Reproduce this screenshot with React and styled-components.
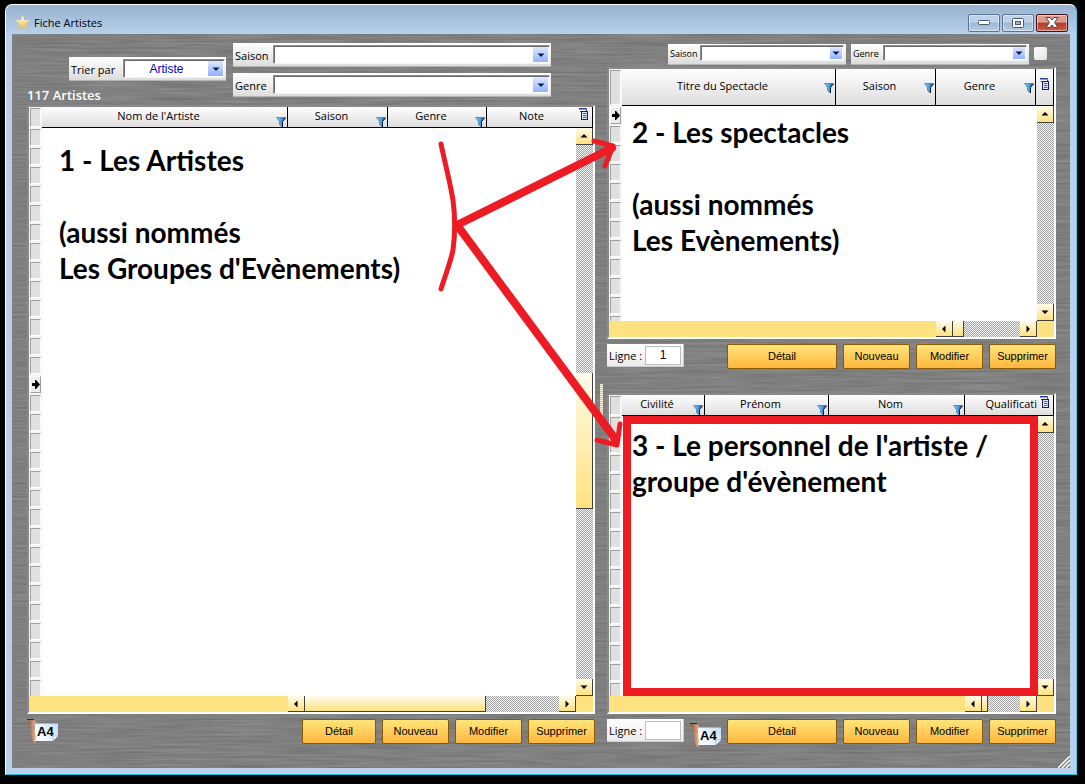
import React from "react";
import styled, { createGlobalStyle, css } from "styled-components";

const UI = `"Open Sans", "Noto Sans", sans-serif`;
const SANS = `"Liberation Sans", Arial, sans-serif`;

const GlobalStyle = createGlobalStyle`
  *, *::before, *::after { box-sizing: border-box; }
  body { margin: 0; background: #000; font-family: ${UI}; color: #000; }
  button, select, input { font: inherit; color: inherit; margin: 0; padding: 0; }
`;

const Page = styled.div`
  position: relative;
  display: flex;
  height: 100vh;
  min-height: 640px;
  min-width: 960px;
  padding: 4px 8px 9px 5px;
  background: #000;
`;

const WindowFrame = styled.main`
  flex: 1;
  display: flex;
  flex-direction: column;
  padding: 0 6px 6px;
  border: 1px solid #fff;
  border-right-color: #3fd0f0;
  border-bottom-color: #1cc4ea;
  border-radius: 7px 7px 0 0;
  background: linear-gradient(#98b3d0, #b9d1ea 30px);
`;

const TitleBar = styled.header`
  flex: none;
  display: flex;
  align-items: center;
  gap: 4px;
  height: 29px;
  padding: 6px 2px 0 3px;
`;

const Title = styled.h1`
  flex: 1;
  margin: 0;
  font-size: 11px;
  line-height: 16px;
  font-weight: 400;
`;

const Controls = styled.div`
  display: flex;
  gap: 2px;
`;

const ControlButton = styled.button`
  display: grid;
  place-items: center;
  width: 32px;
  height: 18px;
  border: 1px solid ${(p) => (p.$close ? "#43101a" : "#5b7394")};
  border-radius: 2px;
  box-shadow: inset 0 0 0 1px rgba(255, 255, 255, 0.45);
  background: ${(p) =>
    p.$close
      ? "linear-gradient(#dd9c90 0 45%, #b83a26 50%, #c8604c)"
      : "linear-gradient(#bdd2e8 0 45%, #9bb7d5 50%, #b5cee8)"};
`;

const Client = styled.div`
  position: relative;
  isolation: isolate;
  flex: 1;
  min-height: 0;
  display: grid;
  grid-template-columns: 568fr 12px 449fr;
  padding: 9px 14px 24px 15px;
  background: #7d7d7d;
  overflow: hidden;
`;

const Texture = styled.svg`
  position: absolute;
  inset: 0;
  z-index: -1;
  width: 100%;
  height: 100%;
`;

const Grip = styled.svg`
  position: absolute;
  right: 0;
  bottom: 0;
`;

const Column = styled.section`
  display: flex;
  flex-direction: column;
  min-width: 0;
  min-height: 0;
`;

const Splitter = styled.div`
  align-self: center;
  justify-self: center;
  width: 3px;
  height: 34px;
  margin-top: 15px;
  background: repeating-linear-gradient(#f3efdc 0 1px, #c9c5b4 1px 2px);
`;

const ArtistTools = styled.div`
  flex: none;
  display: flex;
  gap: 7px;
  height: 62px;
`;

const SortArea = styled.div`
  display: flex;
  flex-direction: column;
  width: 199px;
  padding-top: 14px;
`;

const SortSlot = styled.div`
  padding-left: 42px;
`;

const Count = styled.p`
  margin: 4px 0 0;
  color: #fff;
  font-size: 13px;
  line-height: 20px;
  font-weight: 600;
`;

const FilterStack = styled.div`
  display: flex;
  flex-direction: column;
  gap: 6px;
  width: 318px;
`;

const ShowFilters = styled.div`
  flex: none;
  display: flex;
  justify-content: flex-end;
  gap: 5px;
  height: 24px;
  padding: 1px 9px 2px 0;
`;

const FieldBox = styled.label`
  display: flex;
  align-items: stretch;
  width: ${(p) => p.$width || "auto"};
  height: ${(p) => (p.$small ? 21 : 24)}px;
  padding: ${(p) => (p.$small ? "1px 2px 3px 2px" : "2px 1px 2px 2px")};
  border-bottom: 1px solid #b4b4b4;
  background: linear-gradient(#fff, #dcdcdc);
  font-size: ${(p) => (p.$small ? 9 : 11)}px;
  line-height: ${(p) => (p.$small ? 18 : 22)}px;
`;

const FieldLabel = styled.span`
  flex: none;
  width: ${(p) => p.$width};
  white-space: nowrap;
`;

const SelectShell = styled.span`
  flex: 1;
  display: grid;
  grid-template: minmax(0, 1fr) / minmax(0, 1fr) auto;
  border: 1px solid #8f8f8f;
  border-right-color: #f4f4f4;
  border-bottom-color: #f4f4f4;
  box-shadow: inset 1px 1px #696969;
  background: #fff;
  padding: 1px 1px 1px 2px;
`;

const Select = styled.select`
  grid-area: 1 / 1 / 2 / 3;
  width: 100%;
  padding-right: 16px;
  border: 0;
  background: transparent;
  appearance: none;
  color: #0000c0;
  font-family: ${SANS};
  font-size: 12px;
  line-height: 14px;
  text-align: center;
  text-align-last: center;
`;

const DropMark = styled.span`
  grid-area: 1 / 2;
  display: grid;
  place-items: center;
  width: ${(p) => (p.$small ? 12 : 15)}px;
  background: linear-gradient(#dfe8ff, #93b1ff);
  pointer-events: none;
`;

const Tick = styled.input`
  appearance: none;
  width: 13px;
  height: 13px;
  border: 0;
  border-radius: 2px;
  background: linear-gradient(135deg, #fff, #e2e2e2);
  && { margin: 3px 0 0; }
`;

const GridFrame = styled.div`
  position: relative;
  flex: ${(p) => p.$grow || 1} 1 0;
  min-height: 0;
  display: grid;
  grid-template-columns: minmax(0, 1fr) 17px;
  grid-template-rows: ${(p) => p.$head}px minmax(0, 1fr) 16px;
  border: 2px solid #fff;
  border-top-color: #8a8a8a;
  border-left-color: #8a8a8a;
  background: #fff;
`;

const TableClip = styled.div`
  grid-area: 1 / 1 / 3 / 3;
  min-height: 0;
  overflow: hidden;
`;

const Table = styled.table`
  width: 100%;
  table-layout: fixed;
  border-collapse: separate;
  border-spacing: 0;
`;

const HeadCell = styled.th`
  position: relative;
  height: ${(p) => p.$head}px;
  padding: 0 ${(p) => (p.$filter ? 12 : 0)}px 2px 0;
  border-bottom: 1px solid #000;
  border-right: ${(p) => (p.$open ? "0" : "1px solid #000")};
  background: linear-gradient(#fdfdfd, #dedede);
  font-size: 11px;
  line-height: 16px;
  font-weight: 400;
  white-space: nowrap;
  overflow: hidden;
  text-align: ${(p) => (p.$cut ? "right" : "center")};
`;

const FilterMark = styled.svg`
  position: absolute;
  right: 1px;
  ${(p) => (p.$low ? "bottom: 0;" : "top: 13px;")}
`;

const Stub = styled.th`
  height: ${(p) => p.$height}px;
  padding: 1px;
  background: #f4f4f4;
`;

const StubFace = styled.div`
  display: grid;
  place-items: center;
  height: ${(p) => p.$height}px;
  border: 1px solid #a0a0a0;
  border-right-color: #fff;
  border-bottom-color: #fff;
  background: #e0e0e0;
  ${(p) =>
    p.$current &&
    css`
      border-color: #fff #a0a0a0 #a0a0a0 #fff;
      background: #ececec;
    `}
`;

const Blank = styled.td`
  padding: 0;
  background: #fff;
`;

const dither = css`
  background: repeating-conic-gradient(#a3a3a3 0 25%, #f4f4f4 0 50%) 0 0 / 2px 2px;
`;

const VScroll = styled.div`
  grid-area: 2 / 2;
  display: grid;
  grid-template-rows: ${(p) => p.$rows};
  min-height: 0;
  ${dither}
`;

const HScroll = styled.div`
  grid-area: 3 / 1 / 4 / 3;
  display: grid;
  grid-template-columns: ${(p) => p.$cols};
  ${dither}
`;

const Fill = styled.div`
  background: #ffe27f;
`;

const Thumb = styled.div`
  border-right: 1px solid #404040;
  border-bottom: 1px solid #404040;
  background: linear-gradient(#fffbe9, #ffe27f);
`;

const ScrollButton = styled.button`
  display: grid;
  place-items: center;
  min-width: 0;
  border: 0;
  border-right: 1px solid #404040;
  border-bottom: 1px solid #404040;
  background: linear-gradient(#fffbe9, #ffe27f);
`;

const Note = styled.div`
  position: absolute;
  inset: ${(p) => p.$top}px 17px 16px 13px;
  padding: ${(p) => p.$pad};
  font-family: Lato, Carlito, sans-serif;
  font-size: 28px;
  line-height: 36px;
  font-weight: 700;
  white-space: pre-line;
  pointer-events: none;
  ${(p) =>
    p.$framed &&
    css`
      margin-left: 1px;
      margin-right: -1px;
      border: 8px solid #ed1c24;
    `}
`;

const ActionBar = styled.div`
  flex: none;
  display: flex;
  align-items: flex-start;
  justify-content: space-between;
  padding-top: 5px;
  height: ${(p) => p.$height}px;
`;

const Group = styled.div`
  flex: none;
  display: flex;
  align-items: flex-start;
  gap: 6px;
`;

const ActionButton = styled.button`
  flex: none;
  width: ${(p) => p.$width || 67}px;
  height: 25px;
  border: 1px solid #8a5a00;
  border-radius: 2px;
  background: linear-gradient(#ffe57a, #ffb73f);
  font-family: ${SANS};
  font-size: 11px;
  line-height: 16px;
  && { padding-bottom: 2px; }
`;

const LineBox = styled.label`
  display: flex;
  align-items: center;
  justify-content: space-between;
  width: 77px;
  height: 23px;
  padding: 0 2px;
  border-right: 1px solid #ccc;
  border-bottom: 1px solid #ccc;
  background: linear-gradient(#fff, #ebebeb);
  font-size: 11px;
`;

const LineInput = styled.input`
  width: 36px;
  height: 19px;
  border: 1px solid #bdbdbd;
  background: #fff;
  font-family: ${SANS};
  font-size: 12px;
  text-align: center;
`;

const PrintButton = styled.button`
  height: 28px;
  border: 0;
  background: none;
  && { padding-top: ${(p) => (p.$low ? 4 : 0)}px; }
`;

const Arrows = styled.svg`
  position: absolute;
  inset: 0;
  width: 100%;
  height: 100%;
  pointer-events: none;
`;

const Star = () => (
  <svg width="15" height="15" viewBox="0 0 15 15" aria-hidden="true">
    <defs>
      <linearGradient id="star" x1="0" y1="0" x2="0" y2="1">
        <stop offset="0.2" stopColor="#fff6cf" />
        <stop offset="1" stopColor="#ffb81c" />
      </linearGradient>
    </defs>
    <path d="M7.500 0 9.300 5.200H15L10.500 8.600 12.200 14 7.500 10.800 2.800 14 4.500 8.600 0 5.200H5.700Z" fill="url(#star)" />
  </svg>
);

const Funnel = ({ low }) => (
  <FilterMark $low={low} width="10" height="11" viewBox="0 0 10 11" aria-hidden="true">
    <defs>
      <linearGradient id="funnel">
        <stop offset="0" stopColor="#8fd4fb" />
        <stop offset="0.6" stopColor="#3a93dc" />
        <stop offset="1" stopColor="#12406f" />
      </linearGradient>
    </defs>
    <path d="M0.500 1.500H9.500L6.500 5.500V10.500H5.500L3.500 8.500V5.500Z" fill="url(#funnel)" stroke="#2468a8" strokeWidth="0.600" />
    <path d="M9.500 2 6.500 5.500V11" fill="none" stroke="#0c1c30" />
  </FilterMark>
);

const Sheets = () => (
  <svg width="10" height="12" viewBox="0 0 10 12" aria-hidden="true">
    <path d="M0 0.500H7.500V3" fill="none" stroke="#2c3a94" />
    <path d="M0 1.500H7.500" fill="none" stroke="#8f9be0" />
    <path d="M1 3.500H3" fill="none" stroke="#2c3a94" />
    <rect x="2.500" y="3.500" width="6" height="8" fill="#dfe4ff" stroke="#17205e" />
    <path d="M4 5.500H7.500M4 7.500H7.500M4 9.500H7.500" stroke="#4a58c8" />
  </svg>
);

const shapes = {
  up: "M0.500 5.500H7.500L4 2Z",
  down: "M0.500 2.500H7.500L4 6Z",
  left: "M5.500 0.500V7.500L2 4Z",
  right: "M2.500 0.500V7.500L6 4Z",
};

const Pointer = ({ dir, color = "#000" }) => (
  <svg width="8" height="8" viewBox="0 0 8 8" aria-hidden="true">
    <path d={shapes[dir]} fill={color} />
  </svg>
);

const RowArrow = () => (
  <svg width="8" height="9" viewBox="0 0 8 9" aria-hidden="true">
    <path d="M0 3H3V0H4L8 4.500 4 9H3V6H0Z" fill="#000" />
  </svg>
);

const PaperIcon = () => (
  <svg width="32" height="26" viewBox="0 0 32 26" aria-hidden="true">
    <defs>
      <linearGradient id="paper" x1="0" x2="1" y1="0.500" y2="0">
        <stop offset="0" stopColor="#fff" />
        <stop offset="1" stopColor="#c3defa" />
      </linearGradient>
      <linearGradient id="hand">
        <stop offset="0" stopColor="#8f5a3c" />
        <stop offset="1" stopColor="#f3b58c" />
      </linearGradient>
    </defs>
    <path d="M8 4.500H31V17L26 22H7Z" fill="url(#paper)" />
    <path d="M31 17H26V22Z" fill="#fff" stroke="#8fa8c0" strokeWidth="0.700" />
    <path d="M1 1.500 8 1.500 9 4 7 8 7.500 12 9 18 8 25 6 22 4 15 4 10 2 6Z" fill="url(#hand)" />
    <path d="M0 0.500H7" stroke="#2a2a2a" />
    <text x="10" y="17" fontFamily="Liberation Sans, Arial, sans-serif" fontSize="13" fontWeight="700">A4</text>
  </svg>
);

function Combo({ label, labelWidth, width, small, value = "" }) {
  return (
    <FieldBox $small={small} $width={width}>
      <FieldLabel $width={labelWidth}>{label}</FieldLabel>
      <SelectShell>
        <Select defaultValue={value}>
          <option value={value}>{value}</option>
        </Select>
        <DropMark $small={small}>
          <Pointer dir="down" color="#04204a" />
        </DropMark>
      </SelectShell>
    </FieldBox>
  );
}

function DataGrid({ head, low, columns, rows, current, grow, vRows, hCols, menuWidth = 17, children }) {
  return (
    <GridFrame $grow={grow} $head={head}>
      <TableClip>
        <Table>
          <colgroup>
            <col width="13" />
            {columns.map((c) => (
              <col key={c.label} width={c.width} />
            ))}
            <col width={menuWidth} />
          </colgroup>
          <thead>
            <tr>
              <Stub $height={head} aria-label="Ligne">
                <StubFace $height={head - 2} />
              </Stub>
              {columns.map((c) => (
                <HeadCell key={c.label} scope="col" $head={head} $filter={c.filter} $open={c.open} $cut={c.cut}>
                  {c.label}
                  {c.filter && <Funnel low={low} />}
                </HeadCell>
              ))}
              <HeadCell $head={head} aria-label="Colonnes">
                <Sheets />
              </HeadCell>
            </tr>
          </thead>
          <tbody>
            {Array.from({ length: rows }, (_, i) => (
              <tr key={i}>
                <Stub $height={19}>
                  <StubFace $height={17} $current={i === current}>
                    {i === current && <RowArrow />}
                  </StubFace>
                </Stub>
                <Blank colSpan={columns.length + 1} />
              </tr>
            ))}
          </tbody>
        </Table>
      </TableClip>
      <VScroll $rows={vRows}>
        <ScrollButton aria-label="Monter"><Pointer dir="up" /></ScrollButton>
        <div />
        {grow ? null : <Thumb />}
        {grow ? null : <div />}
        <ScrollButton aria-label="Descendre"><Pointer dir="down" /></ScrollButton>
      </VScroll>
      <HScroll $cols={hCols}>
        <Fill />
        <ScrollButton aria-label="Gauche"><Pointer dir="left" /></ScrollButton>
        <Thumb />
        <div />
        <ScrollButton aria-label="Droite"><Pointer dir="right" /></ScrollButton>
        <Fill />
      </HScroll>
      {children}
    </GridFrame>
  );
}

const Actions = ({ wide }) => (
  <Group>
    <ActionButton $width={wide ? 110 : 74}>Détail</ActionButton>
    <ActionButton>Nouveau</ActionButton>
    <ActionButton>Modifier</ActionButton>
    <ActionButton>Supprimer</ActionButton>
  </Group>
);

const LineField = ({ value }) => (
  <LineBox>
    Ligne :
    <LineInput defaultValue={value} />
  </LineBox>
);

export default function App() {
  return (
    <Page>
      <GlobalStyle />
      <WindowFrame>
        <TitleBar>
          <Star />
          <Title>Fiche Artistes</Title>
          <Controls>
            <ControlButton aria-label="Réduire">
              <svg width="12" height="6" viewBox="0 0 12 6"><rect x="0.500" y="0.500" width="11" height="4" rx="1" fill="#fff" stroke="#4c5a6c" /></svg>
            </ControlButton>
            <ControlButton aria-label="Agrandir">
              <svg width="12" height="10" viewBox="0 0 12 10">
                <rect x="0.500" y="0.500" width="11" height="9" rx="1" fill="#fff" stroke="#4c5a6c" />
                <rect x="3.500" y="3.500" width="5" height="3" fill="#9bb7d5" stroke="#4c5a6c" />
              </svg>
            </ControlButton>
            <ControlButton $close aria-label="Fermer">
              <svg width="14" height="11" viewBox="0 0 14 11"><path d="M1 0.500H5L7 3 9 0.500H13L9.500 5.500 13 10.500H9L7 8 5 10.500H1L4.500 5.500Z" fill="#fff" stroke="#53414a" /></svg>
            </ControlButton>
          </Controls>
        </TitleBar>
        <Client>
          <Texture aria-hidden="true">
            <filter id="brushed" x="0" y="0" width="100%" height="100%" colorInterpolationFilters="sRGB">
              <feTurbulence type="fractalNoise" baseFrequency="0.015 0.450" numOctaves="3" seed="4" />
              <feColorMatrix values="0.140 0 0 0 0.430  0.140 0 0 0 0.430  0.140 0 0 0 0.430  0 0 0 0 1" />
            </filter>
            <rect width="100%" height="100%" filter="url(#brushed)" />
          </Texture>
          <Column>
            <ArtistTools>
              <SortArea>
                <SortSlot>
                  <Combo label="Trier par" labelWidth="52px" value="Artiste" />
                </SortSlot>
                <Count>117 Artistes</Count>
              </SortArea>
              <FilterStack>
                <Combo label="Saison" labelWidth="38px" />
                <Combo label="Genre" labelWidth="38px" />
              </FilterStack>
            </ArtistTools>
            <DataGrid
              head={21}
              low
              rows={30}
              current={13}
              columns={[
                { label: "Nom de l'Artiste", filter: true },
                { label: "Saison", width: 100, filter: true },
                { label: "Genre", width: 99, filter: true },
                { label: "Note", width: 89, open: true },
              ]}
              vRows="17px 228fr 136fr 170fr 17px"
              hCols="259fr 17px 181fr 73fr 17px 17px"
            >
              <Note $top={21} $pad="14px 17px">
                {"1 - Les Artistes\n\n(aussi nommés\nLes Groupes d'Evènements)"}
              </Note>
            </DataGrid>
            <ActionBar $height={30}>
              <PrintButton aria-label="Imprimer A4"><PaperIcon /></PrintButton>
              <Actions />
            </ActionBar>
          </Column>
          <Splitter />
          <Column>
            <ShowFilters>
              <Combo small label="Saison" labelWidth="30px" width="178px" />
              <Combo small label="Genre" labelWidth="30px" width="178px" />
              <Tick type="checkbox" aria-label="Filtrer" />
            </ShowFilters>
            <DataGrid
              head={37}
              rows={12}
              current={0}
              grow={272}
              menuWidth={18}
              columns={[
                { label: "Titre du Spectacle", filter: true },
                { label: "Saison", width: 100, filter: true },
                { label: "Genre", width: 100, filter: true },
              ]}
              vRows="17px 1fr 17px"
              hCols="327fr 17px 11fr 56fr 17px 17px"
            >
              <Note $top={37} $pad="8px 10px">
                {"2 - Les spectacles\n\n(aussi nommés\nLes Evènements)"}
              </Note>
            </DataGrid>
            <ActionBar $height={54}>
              <LineField value="1" />
              <Actions wide />
            </ActionBar>
            <DataGrid
              head={21}
              low
              rows={15}
              grow={321}
              columns={[
                { label: "Civilité", width: 83, filter: true },
                { label: "Prénom", width: 124, filter: true },
                { label: "Nom", filter: true },
                { label: "Qualificati", width: 72, open: true, cut: true },
              ]}
              vRows="17px 1fr 17px"
              hCols="356fr 17px 6fr 32fr 17px 17px"
            >
              <Note $top={21} $pad="3px 1px" $framed>
                {"3 - Le personnel de l'artiste /\ngroupe d'évènement"}
              </Note>
            </DataGrid>
            <ActionBar $height={30}>
              <Group>
                <LineField value="" />
                <PrintButton $low aria-label="Imprimer A4"><PaperIcon /></PrintButton>
              </Group>
              <Actions wide />
            </ActionBar>
          </Column>
          <Grip width="12" height="12" viewBox="0 0 12 12" aria-hidden="true">
            <path d="M0 12 12 0M4 12 12 4M8 12 12 8" stroke="#fff" strokeWidth="1.500" />
          </Grip>
        </Client>
      </WindowFrame>
      <Arrows viewBox="0 0 1085 784" preserveAspectRatio="none" fill="none" stroke="#ed1c24" strokeLinecap="round" strokeLinejoin="round" aria-hidden="true">
        <path d="M441 144C445 163 450 182 453 200C455 215 455 235 453 250C450 264 445 276 441 289" strokeWidth="5" />
        <path d="M457 225 612 148" strokeWidth="8" />
        <path d="M594 141 613 146 605 166" strokeWidth="5" />
        <path d="M457 225 616 440" strokeWidth="8" />
        <path d="M597 440 617 445 620 424" strokeWidth="5" />
      </Arrows>
    </Page>
  );
}
